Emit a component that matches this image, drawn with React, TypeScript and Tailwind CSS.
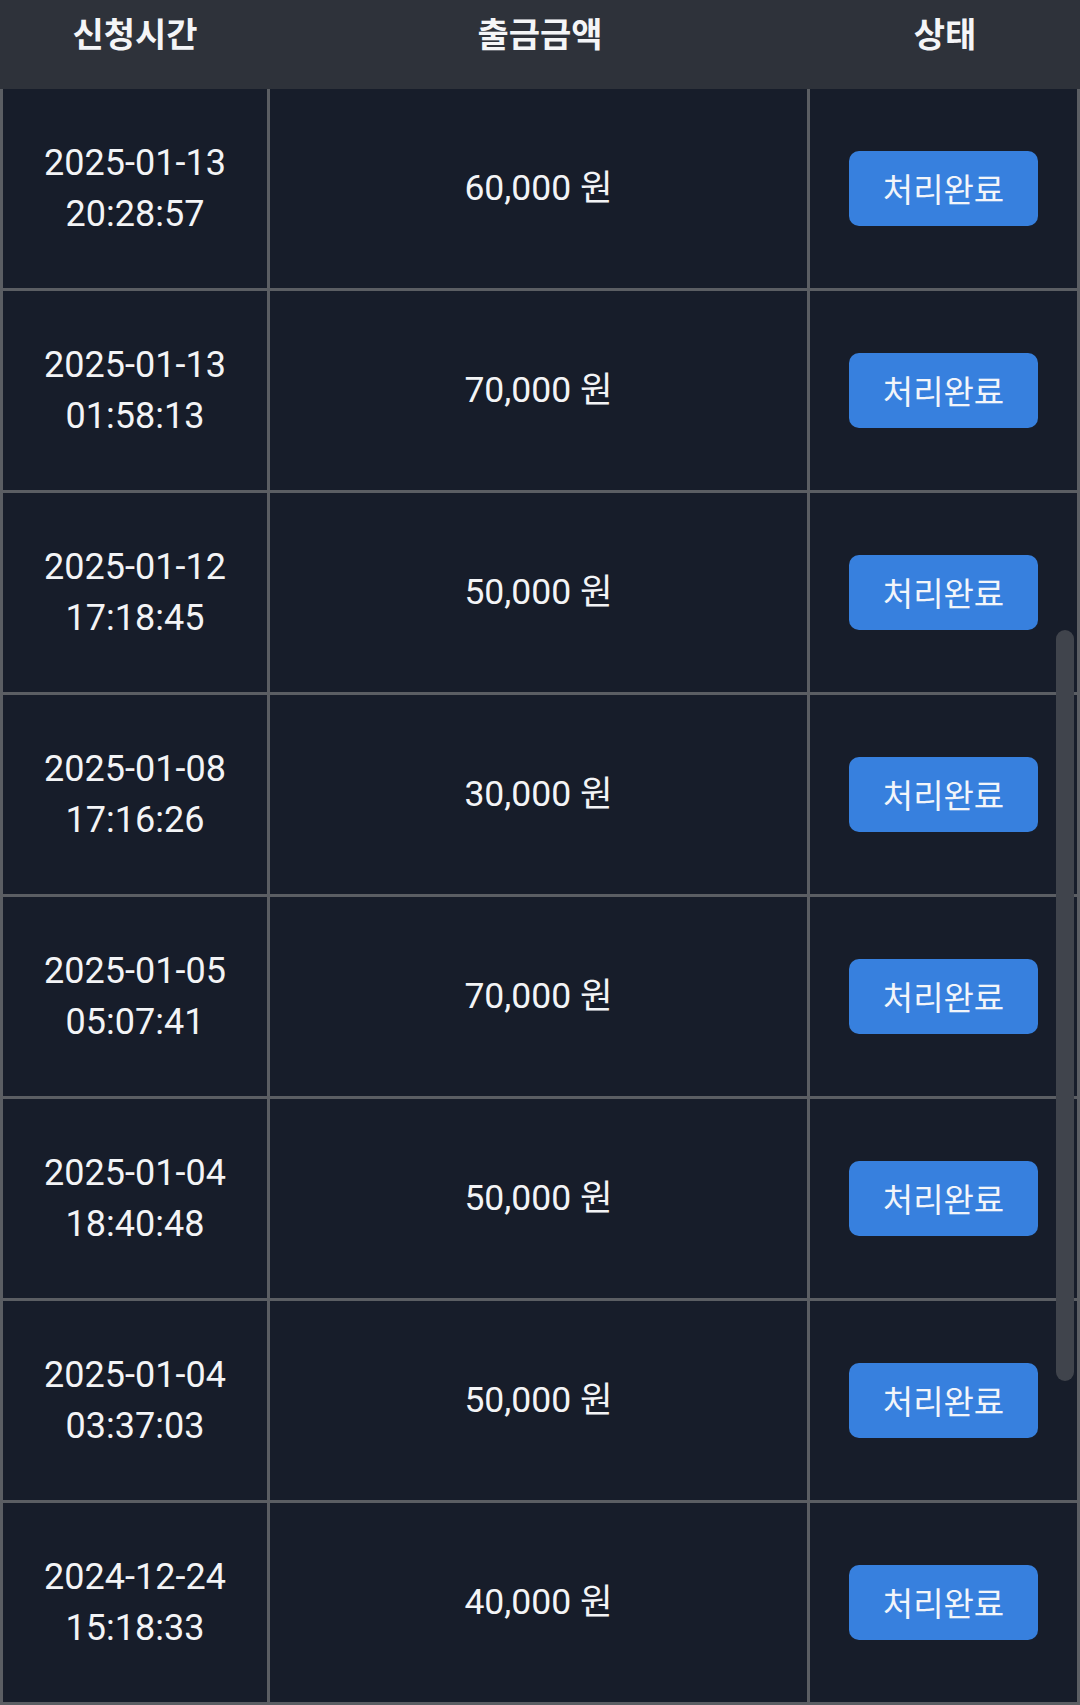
const rows = [
  { date: '2025-01-13', time: '20:28:57', amount: '60,000' },
  { date: '2025-01-13', time: '01:58:13', amount: '70,000' },
  { date: '2025-01-12', time: '17:18:45', amount: '50,000' },
  { date: '2025-01-08', time: '17:16:26', amount: '30,000' },
  { date: '2025-01-05', time: '05:07:41', amount: '70,000' },
  { date: '2025-01-04', time: '18:40:48', amount: '50,000' },
  { date: '2025-01-04', time: '03:37:03', amount: '50,000' },
  { date: '2024-12-24', time: '15:18:33', amount: '40,000' },
];

export default function App() {
  return (
    <div className="relative w-[1080px] h-[1705px] overflow-hidden bg-[#171d2a] text-white font-['Roboto','Noto_Sans_CJK_KR',sans-serif]">
      <div className="flex h-[89px] bg-[#2e323a] pt-[10px] text-[34px] font-bold leading-[46px] text-[#f4f5f7] font-['Noto_Sans_CJK_KR',sans-serif]">
        <div className="w-[270px] text-center">신청시간</div>
        <div className="w-[540px] text-center">출금금액</div>
        <div className="flex-1 text-center">상태</div>
      </div>

      {rows.map((r, i) => (
        <div key={i} className="flex h-[202px] border-x-[3px] border-b-[3px] border-[#5b5e63]">
          <div className="flex w-[264px] flex-col items-center justify-center text-[36px] leading-[51px] text-[#f3f4f6]">
            <span>{r.date}</span>
            <span>{r.time}</span>
          </div>
          <div className="flex w-[540px] items-center justify-center border-l-[3px] border-[#5b5e63] text-[35.5px] text-[#f3f4f6]">
            {r.amount} 원
          </div>
          <div className="flex flex-1 items-center justify-center border-l-[3px] border-[#5b5e63]">
            <div className="flex h-[75px] w-[189px] items-center justify-center rounded-[10px] bg-[#3780de] text-[33px] text-[#f2f5fa] font-['Noto_Sans_CJK_KR',sans-serif]">
              처리완료
            </div>
          </div>
        </div>
      ))}

      <div className="absolute left-[1056px] top-[630px] h-[751px] w-[18px] rounded-full bg-[#40444c]" />
    </div>
  );
}
